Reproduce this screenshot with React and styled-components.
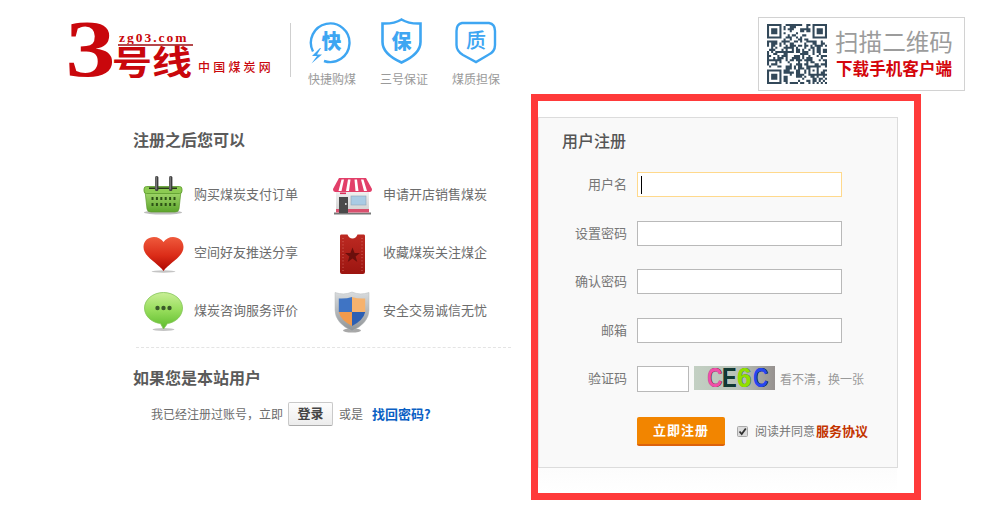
import React from "react";
import styled, { createGlobalStyle } from "styled-components";

const GlobalStyle = createGlobalStyle`
  html, body { margin: 0; padding: 0; background: #fff; }
  body { font-family: "Noto Sans CJK SC", "Liberation Sans", sans-serif; color: #666; }
  * { box-sizing: border-box; }
`;

const CJK = `"Noto Sans CJK SC", "Liberation Sans", sans-serif`;

const Page = styled.div`
  width: 993px;
  height: 526px;
  overflow: hidden;
`;

const Header = styled.header`
  display: flex;
  align-items: flex-start;
  height: 94px;
  padding: 17px 28px 0 69px;
`;

const Logo = styled.div`
  display: flex;
  align-items: flex-start;
  width: 202px;
  height: 60px;
  margin-top: 3px;
  color: #c9070c;
`;

const LogoDigit = styled.span`
  display: block;
  flex: none;
  width: 46px;
  height: 60px;
  font: 700 80px/58px "Liberation Serif", serif;
  transform: scaleX(1.25);
  transform-origin: 14px 50%;
`;

const LogoWords = styled.div`
  display: flex;
  flex-direction: column;
  flex: none;
  width: 78px;
  padding-top: 10px;
`;

const LogoDomain = styled.span`
  display: block;
  height: 14px;
  padding-left: 4px;
  font: 700 13.5px/15px "Liberation Serif", serif;
  letter-spacing: 2px;
  white-space: nowrap;
`;

const LogoRule = styled.span`
  display: block;
  height: 2px;
  margin-left: 3px;
  background: #b5484c;
`;

const LogoName = styled.span`
  display: block;
  height: 31px;
  margin-left: -3px;
  font: 700 40px/30px ${CJK};
  white-space: nowrap;
  transform: scaleY(0.84);
  transform-origin: 0 50%;
`;

const LogoTag = styled.span`
  margin: 39px 0 0 5px;
  font: 500 12px/16px ${CJK};
  letter-spacing: 3.2px;
  white-space: nowrap;
`;

const Divider = styled.div`
  width: 1px;
  height: 54px;
  margin: 6px 6px 0 19px;
  background: #cfcfcf;
`;

const Features = styled.div`
  display: flex;
  margin-top: 1px;
`;

const Feature = styled.div`
  display: flex;
  flex-direction: column;
  align-items: center;
  width: 72px;
`;

const FeatureLabel = styled.span`
  margin: 5px 2px 0 0;
  font-size: 12px;
  line-height: 20px;
  color: #9a9a9a;
  white-space: nowrap;
`;

const QrBox = styled.div`
  display: flex;
  width: 207px;
  height: 74px;
  margin-left: auto;
  padding: 6px 0 0 8px;
  border: 1px solid #d2d2d2;
`;

const QrText = styled.div`
  display: flex;
  flex-direction: column;
  margin-left: 8px;
`;

const QrTitle = styled.span`
  font-size: 23.6px;
  line-height: 34px;
  color: #9c9c9c;
  white-space: nowrap;
`;

const QrSub = styled.span`
  margin: 1px 0 0 1px;
  font-size: 16.6px;
  font-weight: 700;
  line-height: 18px;
  color: #d4060c;
  white-space: nowrap;
`;

const Main = styled.main`
  display: flex;
  align-items: flex-start;
  padding-left: 133px;
`;

const Benefits = styled.section`
  width: 378px;
  padding-top: 37px;
`;

const Heading = styled.h2`
  margin: 0;
  padding-bottom: 3px;
  font-size: 16px;
  font-weight: 700;
  line-height: 17px;
  color: #5a5a5a;
`;

const BenefitGrid = styled.div`
  display: grid;
  grid-template-columns: 190px 188px;
  grid-auto-rows: 58px;
  margin: 15px 0 7px 10px;
`;

const Benefit = styled.div`
  display: flex;
  align-items: center;
  font-size: 13px;
  color: #6c6c6c;
  white-space: nowrap;
`;

const BenefitText = styled.span`
  margin-bottom: 3px;
`;

const IconSlot = styled.svg`
  flex: none;
  display: block;
  width: 51px;
  height: 46px;
  margin-right: ${(p) => p.$gap || 0}px;
`;

const DashedRule = styled.div`
  height: 1px;
  margin-left: 3px;
  border-top: 1px dashed #e4e4e4;
`;

const SecondHeading = styled(Heading)`
  margin-top: 21px;
`;

const LoginRow = styled.div`
  display: flex;
  align-items: center;
  height: 24px;
  margin-top: 13px;
  padding-left: 18px;
  font-size: 12px;
  color: #6c6c6c;
  white-space: nowrap;
`;

const LoginText = styled.span`
  margin-bottom: 2px;
`;

const LoginButton = styled.button`
  width: 45px;
  height: 24px;
  margin: 0 6px 0 5px;
  padding: 0 0 2px;
  border: 1px solid #c9c9c9;
  border-bottom-color: #aaa;
  border-radius: 2px;
  background: linear-gradient(#fdfdfd, #ececec);
  font: 700 13px/20px ${CJK};
  color: #444;
`;

const ForgotLink = styled.a`
  margin: 0 0 2px 9px;
  font-size: 13px;
  font-weight: 700;
  color: #0a5fc4;
`;

const Highlight = styled.section`
  width: 390px;
  height: 406px;
  margin-left: 20px;
  padding-top: 16px;
  border: 7px solid #ff3a3a;
  background: #fff;
`;

const Panel = styled.div`
  width: 360px;
  height: 351px;
  padding: 14px 0 0 23px;
  border: 1px solid #dcdcdc;
  background: #f9f9f9;
`;

const PanelFade = styled.div`
  width: 359px;
  height: 25px;
  background: linear-gradient(#fcfcfc, #fff);
`;

const PanelTitle = styled.h3`
  margin: 0 0 20px;
  padding-bottom: 4px;
  font-size: 16px;
  font-weight: 500;
  line-height: 16px;
  color: #555;
`;

const Form = styled.form`
  display: flex;
  flex-direction: column;
  gap: 23.5px;
  margin: 0;
`;

const Row = styled.div`
  display: flex;
  align-items: ${(p) => (p.$top ? "flex-start" : "center")};
  height: ${(p) => p.$h || 25}px;
`;

const Label = styled.label`
  flex: none;
  width: 65px;
  margin-right: 10px;
  padding-bottom: 2px;
  font-size: 13px;
  line-height: 23px;
  text-align: right;
  color: #777;
`;

const Field = styled.input`
  display: block;
  width: ${(p) => p.$w || 205}px;
  height: ${(p) => p.$hgt || 25}px;
  padding: 0;
  border: 1px solid ${(p) => (p.$active ? "#ffd98c" : "#b9b9b9")};
  border-radius: 0;
  outline: none;
  background: #fff;
  ${(p) =>
    p.$active
      ? "background: #fff linear-gradient(#000, #000) 3px 3px / 1px 18px no-repeat;"
      : ""}
`;

const Captcha = styled.div`
  display: flex;
  flex: none;
  width: 81px;
  height: 24px;
  margin-left: 5px;
  padding-left: 13px;
  background: linear-gradient(90deg, #c3d0c3, #b9c2b8 55%, #96918f);
  font: 700 27px/24px "Liberation Sans", sans-serif;
`;

const CaptchaChar = styled.span`
  display: block;
  width: ${(p) => p.$w || 15}px;
  height: 24px;
  color: ${(p) => p.$c};
  text-shadow: 0.5px 0 0 ${(p) => p.$s || "#111"};
  transform: scaleX(${(p) => p.$x || 0.78});
  transform-origin: 0 50%;
`;

const CaptchaHint = styled.span`
  margin: 3px 0 0 5px;
  font-size: 12px;
  line-height: 20px;
  color: #9a9a9a;
  white-space: nowrap;
`;

const ActionRow = styled.div`
  display: flex;
  align-items: center;
  height: 29px;
  margin: 25px 0 0 75px;
  font-size: 12px;
  color: #777;
  white-space: nowrap;
`;

const SubmitButton = styled.button`
  width: 88px;
  height: 29px;
  padding: 0 0 2px;
  border: 0;
  border-bottom: 2px solid #dc620c;
  border-radius: 2px;
  background: #f28500;
  font: 700 13px/24px ${CJK};
  letter-spacing: 1px;
  color: #fff;
`;

const CheckIcon = styled.svg`
  display: block;
  flex: none;
  width: 11px;
  height: 11px;
  margin: 0 7px 0 12px;
`;

const AgreeText = styled.span`
  margin-bottom: 2px;
`;

const AgreeLink = styled.a`
  margin: 0 0 2px 1px;
  font-size: 13px;
  font-weight: 700;
  color: #c33400;
`;

/* deterministic QR-like matrix */
const N = 29;
function buildQr() {
  const m = [];
  let seed = 20417;
  const rnd = () => {
    seed = (seed * 16807) % 2147483647;
    return seed / 2147483647;
  };
  for (let y = 0; y < N; y++) {
    m[y] = [];
    for (let x = 0; x < N; x++) m[y][x] = rnd() > 0.5;
  }
  const finder = (ox, oy) => {
    for (let y = -1; y < 8; y++)
      for (let x = -1; x < 8; x++) {
        const X = ox + x;
        const Y = oy + y;
        if (X < 0 || Y < 0 || X >= N || Y >= N) continue;
        const inside = x >= 0 && x < 7 && y >= 0 && y < 7;
        const ring = x === 0 || y === 0 || x === 6 || y === 6;
        const core = x >= 2 && x <= 4 && y >= 2 && y <= 4;
        m[Y][X] = inside && (ring || core);
      }
  };
  finder(0, 0);
  finder(22, 0);
  finder(0, 22);
  for (let y = 20; y < 25; y++)
    for (let x = 20; x < 25; x++) {
      const ring = x === 20 || x === 24 || y === 20 || y === 24;
      m[y][x] = ring || (x === 22 && y === 22);
    }
  let d = "";
  m.forEach((row, y) =>
    row.forEach((on, x) => {
      if (on) d += `M${x} ${y}h1v1h-1z`;
    })
  );
  return d;
}
const qrPath = buildQr();

const QrSvg = styled.svg`
  flex: none;
  display: block;
  width: 60px;
  height: 60px;
`;

const QrCode = () => (
  <QrSvg viewBox="0 0 29 29">
    <path d={qrPath} fill="#33495a" />
  </QrSvg>
);

const BLUE = "#3ea6f2";

const FastIcon = () => (
  <svg width="72" height="46" viewBox="0 0 72 46">
    <path d="M16 33.5 A19.3 19.3 0 1 1 27 43" fill="none" stroke={BLUE} strokeWidth="2.4" />
    <path d="M23 30 L15 38 H20 L14.5 45.5 L25 36.5 H20 L24 30 Z" fill={BLUE} />
    <text x="34.5" y="31" textAnchor="middle" fontFamily={CJK} fontWeight="900" fontSize="20" fill={BLUE}>快</text>
  </svg>
);

const GuardIcon = () => (
  <svg width="72" height="46" viewBox="0 0 72 46">
    <path d="M13.5 5.5 Q25 6 32.5 1.5 Q40 6 51.5 5.5 V24 Q51.5 36 32.5 44.5 Q13.5 36 13.5 24 Z" fill="none" stroke={BLUE} strokeWidth="2.6" />
    <text x="32.5" y="31" textAnchor="middle" fontFamily={CJK} fontWeight="900" fontSize="20" fill={BLUE}>保</text>
  </svg>
);

const QualityIcon = () => (
  <svg width="72" height="46" viewBox="0 0 72 46">
    <path d="M21 5 H48 Q54 6 54 13 V27 Q54 34 47 37 L35 44 L22 37 Q15.5 33 15.5 27 V13 Q15.5 6 21 5 Z" fill="none" stroke={BLUE} strokeWidth="2.4" />
    <text x="35" y="30" textAnchor="middle" fontFamily={CJK} fontWeight="500" fontSize="20" fill={BLUE}>质</text>
  </svg>
);

const BasketIcon = () => (
  <IconSlot viewBox="0 0 51 46">
    <defs>
      <linearGradient id="bk" x1="0" y1="0" x2="0" y2="1">
        <stop offset="0" stopColor="#a6d96f" />
        <stop offset="1" stopColor="#5ca52c" />
      </linearGradient>
    </defs>
    <ellipse cx="20" cy="40.5" rx="19" ry="2" fill="#bdbdbd" />
    <path d="M2 19 H38 L36 37 Q35.6 40 32 40 H8 Q4.4 40 4 37 Z" fill="url(#bk)" stroke="#5b9a2b" strokeWidth="0.7" />
    <rect x="1" y="14.5" width="38" height="7" rx="2.5" fill="#8dcb52" stroke="#5b9a2b" strokeWidth="0.8" />
    <rect x="6" y="15.5" width="28" height="1.4" fill="#1c2a12" />
    {[0, 1].map((r) =>
      [0, 1, 2, 3, 4, 5].map((c) => (
        <rect key={`${r}${c}`} x={8.5 + c * 4.4} y={25 + r * 6} width="2" height="3" fill="#2d5216" />
      ))
    )}
    <rect x="12" y="4" width="3.4" height="15" rx="1.5" fill="#3c3c3c" />
    <rect x="26" y="4" width="3.4" height="15" rx="1.5" fill="#3c3c3c" />
    <rect x="12.6" y="4.5" width="1" height="13" fill="#9a9a9a" />
    <rect x="26.6" y="4.5" width="1" height="13" fill="#9a9a9a" />
  </IconSlot>
);

const HeartIcon = () => (
  <IconSlot viewBox="0 0 51 46">
    <defs>
      <linearGradient id="ht" x1="0" y1="0" x2="0" y2="1">
        <stop offset="0" stopColor="#ef5a3c" />
        <stop offset="0.55" stopColor="#db2c18" />
        <stop offset="1" stopColor="#ad0600" />
      </linearGradient>
    </defs>
    <ellipse cx="20.5" cy="41.5" rx="12" ry="1.2" fill="#c4c4c4" />
    <path d="M20.5 41 C15 33 0.5 27 0.5 17 C0.5 10.5 5.5 7 11 7 C15 7 18.5 9 20.5 12 C22.5 9 26 7 30 7 C35.5 7 40.5 10.5 40.5 17 C40.5 27 26 33 20.5 41 Z" fill="url(#ht)" />
  </IconSlot>
);

const BubbleIcon = () => (
  <IconSlot viewBox="0 0 51 46">
    <defs>
      <linearGradient id="bb" x1="0" y1="0" x2="0" y2="1">
        <stop offset="0" stopColor="#c9ef96" />
        <stop offset="0.5" stopColor="#95dc5a" />
        <stop offset="1" stopColor="#5dbb2c" />
      </linearGradient>
    </defs>
    <ellipse cx="20.5" cy="41.5" rx="11" ry="1.5" fill="#c4c4c4" />
    <path d="M20.5 4.5 C31 4.5 39.5 11.5 39.5 20 C39.5 28 32.5 34.5 24.5 35.5 L20.5 41 L17.5 35.5 C8.5 34.5 1.5 28 1.5 20 C1.5 11.5 10 4.5 20.5 4.5 Z" fill="url(#bb)" stroke="#82c455" strokeWidth="0.8" />
    <circle cx="14.5" cy="20" r="2.2" fill="#3b5a2a" />
    <circle cx="20.5" cy="20" r="2.2" fill="#3b5a2a" />
    <circle cx="26.5" cy="20" r="2.2" fill="#3b5a2a" />
  </IconSlot>
);

const ShopIcon = () => (
  <IconSlot viewBox="0 0 51 46" $gap={-1}>
    <defs>
      <linearGradient id="sb" x1="0" y1="0" x2="0" y2="1">
        <stop offset="0" stopColor="#f2f2f2" />
        <stop offset="1" stopColor="#cfcfcf" />
      </linearGradient>
    </defs>
    <rect x="1" y="40.5" width="37" height="2" fill="#777" />
    <rect x="3" y="18" width="33" height="23" fill="url(#sb)" />
    <rect x="3" y="37" width="33" height="3.5" fill="#d9506e" />
    <rect x="6" y="25" width="9" height="16" fill="#4a4a4a" />
    <rect x="7" y="20.5" width="6" height="1.6" fill="#d9305a" />
    <rect x="12" y="31" width="1.6" height="2" fill="#ccc" />
    <rect x="18" y="24" width="15" height="9" fill="#a9cbe4" stroke="#8fa6b5" strokeWidth="0.6" />
    <path d="M6 6 H33 L39 17 Q39 20 36.5 20 H2.5 Q0 20 0 17 Z" fill="#e23f69" />
    <path d="M8.5 7.5 H11 L8.5 19 H5.5 Z M15 7.5 H17.5 L16 19 H13 Z M21.5 7.5 H24 L25.5 19 H22.5 Z M28 7.5 H30.5 L34 19 H31 Z" fill="#fff" />
  </IconSlot>
);

const TicketIcon = () => (
  <IconSlot viewBox="0 0 51 46" $gap={-1}>
    <defs>
      <linearGradient id="tk" x1="0" y1="0" x2="0" y2="1">
        <stop offset="0" stopColor="#bd2a22" />
        <stop offset="1" stopColor="#9c1510" />
      </linearGradient>
    </defs>
    <path d="M8 4.5 H14.5 Q16 8.5 19.5 8.5 Q23 8.5 24.5 4.5 H31 Q32 4.5 32 6 V42 Q32 44 30 44 H9 Q7 44 7 42 V6 Q7 4.5 8 4.5 Z" fill="url(#tk)" />
    <path d="M10 8 V41 M29 8 V41" stroke="#e2867d" strokeWidth="0.7" strokeDasharray="1 2.2" />
    <path d="M19.5 17.5 L21.6 23 H27 L22.6 26.4 L24.3 32 L19.5 28.6 L14.7 32 L16.4 26.4 L12 23 H17.4 Z" fill="#6b0f0c" />
  </IconSlot>
);

const ShieldIcon = () => (
  <IconSlot viewBox="0 0 51 46" $gap={-1}>
    <defs>
      <linearGradient id="sd" x1="0" y1="0" x2="0" y2="1">
        <stop offset="0" stopColor="#d9dcde" />
        <stop offset="1" stopColor="#8f9396" />
      </linearGradient>
    </defs>
    <ellipse cx="19" cy="42.5" rx="9" ry="2" fill="#a8a8a8" />
    <path d="M19 4 Q27 7.5 36 4.5 V22 Q36 35 19 43 Q2 35 2 22 V4.5 Q11 7.5 19 4 Z" fill="url(#sd)" stroke="#b4b8ba" strokeWidth="0.5" />
    <path d="M19 9 V24 H5.8 V10.5 Q13 11 19 9 Z" fill="#3f74c4" />
    <path d="M19 9 V24 H32.2 V10.5 Q25 11 19 9 Z" fill="#f6b26d" />
    <path d="M5.8 24 H19 V38 Q7.5 32 5.8 24 Z" fill="#f19a4c" />
    <path d="M32.2 24 H19 V38 Q30.5 32 32.2 24 Z" fill="#2c5fb3" />
  </IconSlot>
);

export default function App() {
  return (
    <Page>
      <GlobalStyle />
      <Header>
        <Logo>
          <LogoDigit>3</LogoDigit>
          <LogoWords>
            <LogoDomain>zg03.com</LogoDomain>
            <LogoRule />
            <LogoName>号线</LogoName>
          </LogoWords>
          <LogoTag>中国煤炭网</LogoTag>
        </Logo>
        <Divider />
        <Features>
          <Feature>
            <FastIcon />
            <FeatureLabel>快捷购煤</FeatureLabel>
          </Feature>
          <Feature>
            <GuardIcon />
            <FeatureLabel>三号保证</FeatureLabel>
          </Feature>
          <Feature>
            <QualityIcon />
            <FeatureLabel>煤质担保</FeatureLabel>
          </Feature>
        </Features>
        <QrBox>
          <QrCode />
          <QrText>
            <QrTitle>扫描二维码</QrTitle>
            <QrSub>下载手机客户端</QrSub>
          </QrText>
        </QrBox>
      </Header>
      <Main>
        <Benefits>
          <Heading>注册之后您可以</Heading>
          <BenefitGrid>
            <Benefit><BasketIcon /><BenefitText>购买煤炭支付订单</BenefitText></Benefit>
            <Benefit><ShopIcon /><BenefitText>申请开店销售煤炭</BenefitText></Benefit>
            <Benefit><HeartIcon /><BenefitText>空间好友推送分享</BenefitText></Benefit>
            <Benefit><TicketIcon /><BenefitText>收藏煤炭关注煤企</BenefitText></Benefit>
            <Benefit><BubbleIcon /><BenefitText>煤炭咨询服务评价</BenefitText></Benefit>
            <Benefit><ShieldIcon /><BenefitText>安全交易诚信无忧</BenefitText></Benefit>
          </BenefitGrid>
          <DashedRule />
          <SecondHeading>如果您是本站用户</SecondHeading>
          <LoginRow>
            <LoginText>我已经注册过账号，立即</LoginText>
            <LoginButton type="button">登录</LoginButton>
            <LoginText>或是</LoginText>
            <ForgotLink>找回密码?</ForgotLink>
          </LoginRow>
        </Benefits>
        <Highlight>
          <Panel>
            <PanelTitle>用户注册</PanelTitle>
            <Form>
              <Row>
                <Label>用户名</Label>
                <Field $active />
              </Row>
              <Row>
                <Label>设置密码</Label>
                <Field type="password" />
              </Row>
              <Row>
                <Label>确认密码</Label>
                <Field type="password" />
              </Row>
              <Row>
                <Label>邮箱</Label>
                <Field />
              </Row>
              <Row $h={26} $top>
                <Label>验证码</Label>
                <Field $w={52} $hgt={26} />
                <Captcha>
                  <CaptchaChar $c="#f04fa8">C</CaptchaChar>
                  <CaptchaChar $c="#123a34">E</CaptchaChar>
                  <CaptchaChar $c="#8fe000" $s="#2d5a10" $w={16} $x={0.95}>6</CaptchaChar>
                  <CaptchaChar $c="#2546f0">C</CaptchaChar>
                </Captcha>
                <CaptchaHint>看不清，换一张</CaptchaHint>
              </Row>
            </Form>
            <ActionRow>
              <SubmitButton type="button">立即注册</SubmitButton>
              <CheckIcon viewBox="0 0 11 11">
                <rect x="0.5" y="0.5" width="10" height="10" rx="1" fill="#dcdcdc" stroke="#aaa" />
                <path d="M2.5 5.5 L4.7 8 L8.8 2.5" fill="none" stroke="#333" strokeWidth="1.8" />
              </CheckIcon>
              <AgreeText>阅读并同意</AgreeText>
              <AgreeLink>服务协议</AgreeLink>
            </ActionRow>
          </Panel>
          <PanelFade />
        </Highlight>
      </Main>
    </Page>
  );
}
